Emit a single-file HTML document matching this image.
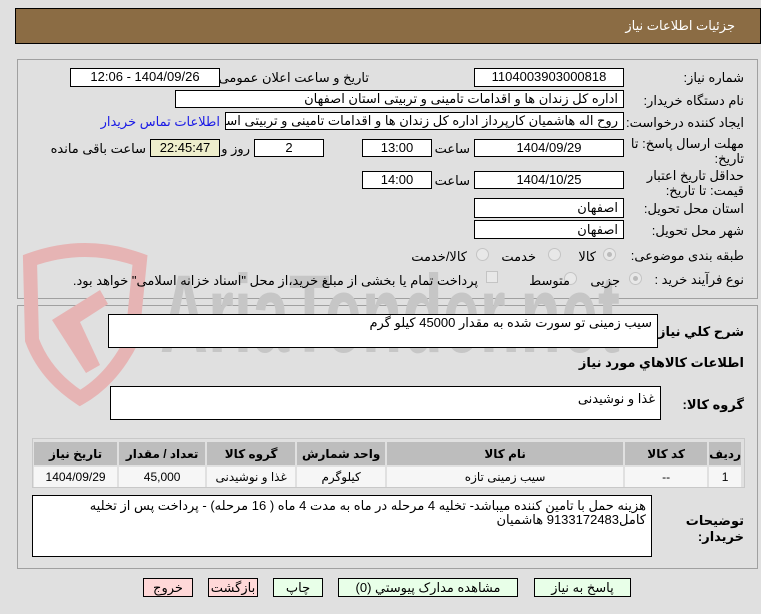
<!DOCTYPE html>
<html><head><meta charset="utf-8">
<style>
*{margin:0;padding:0;box-sizing:border-box}
body{width:761px;height:614px;background:#e0e0e0;font-family:"Liberation Sans","DejaVu Sans",sans-serif;font-size:12px;color:#000;position:relative;overflow:hidden}
.a{position:absolute;white-space:nowrap}
.box{position:absolute;background:#fff;border:1px solid #000;direction:rtl;padding:0 5px;line-height:16px;font-size:13px;white-space:nowrap;overflow:hidden}
.c{text-align:center}
.l{position:absolute;direction:rtl;text-align:right;white-space:nowrap;font-size:13px}
.b{font-weight:bold}
.radio{position:absolute;width:13px;height:13px;border-radius:50%;border:1px solid #c4c4c4;background:#e8e8e8}
.radio.on::after{content:"";position:absolute;left:3px;top:3px;width:5px;height:5px;border-radius:50%;background:#bbb}
.btn{position:absolute;height:19px;border:1px solid #000;background:#e8ffe8;text-align:center;line-height:17px;font-size:13px;direction:rtl}
.pink{background:#ffd8d8}
table{border-collapse:separate;border-spacing:2px}
td{text-align:center;font-size:12px}
</style></head><body>
<div class="a" style="left:15px;top:8px;width:746px;height:36px;background:#8b6c44;border:1px solid #000"></div>
<div class="l" style="right:26px;top:18px;color:#fff;font-size:13px">جزئیات اطلاعات نیاز</div>

<div class="a" style="left:17px;top:59px;width:741px;height:240px;border:1px solid #a0a0a0"></div>
<div class="a" style="left:17px;top:305px;width:741px;height:264px;border:1px solid #a0a0a0"></div>

<!-- watermark -->
<svg class="a" style="left:0;top:240px" width="660" height="170">
<path d="M30 20 Q85 0 140 20 L132 100 Q112 140 80 158 Q45 135 32 100 Z" fill="none" stroke="#e6b4b4" stroke-width="14"/>
<path d="M52 80 L100 50 L108 64 L80 82 L100 125 L86 133 Z" fill="#e6b4b4"/>
<text x="160" y="112" font-family="Liberation Sans" font-size="110" font-weight="bold" fill="#c6c6c6" textLength="460" lengthAdjust="spacingAndGlyphs">AriaTender.net</text>
</svg>

<div class="l" style="right:17px;top:70px">شماره نیاز:</div>
<div class="box c" style="left:474px;top:68px;width:150px;height:19px">1104003903000818</div>
<div class="l" style="right:392px;top:70px">تاریخ و ساعت اعلان عمومی:</div>
<div class="box c" style="left:70px;top:68px;width:150px;height:19px">1404/09/26 - 12:06</div>

<div class="l" style="right:17px;top:93px">نام دستگاه خریدار:</div>
<div class="box" style="left:175px;top:90px;width:449px;height:18px">اداره کل زندان ها و اقدامات تامینی و تربیتی استان اصفهان</div>

<div class="l" style="right:17px;top:115px">ایجاد کننده درخواست:</div>
<div class="box" style="left:225px;top:112px;width:399px;height:18px">روح اله هاشمیان کارپرداز اداره کل زندان ها و اقدامات تامینی و تربیتی استان اصفهان</div>
<div class="l" style="right:541px;top:114px;color:#1a1ae6">اطلاعات تماس خریدار</div>

<div class="l" style="right:17px;top:136px;line-height:15px">مهلت ارسال پاسخ: تا<br>تاریخ:</div>
<div class="box c" style="left:474px;top:139px;width:150px;height:18px">1404/09/29</div>
<div class="l" style="right:291px;top:141px">ساعت</div>
<div class="box c" style="left:362px;top:139px;width:70px;height:18px">13:00</div>
<div class="box c" style="left:254px;top:139px;width:70px;height:18px">2</div>
<div class="l" style="right:511px;top:141px">روز و</div>
<div class="box c" style="left:150px;top:139px;width:70px;height:18px;background:#eeeecc">22:45:47</div>
<div class="l" style="right:615px;top:141px">ساعت باقی مانده</div>

<div class="l" style="right:17px;top:168px;line-height:15px">حداقل تاریخ اعتبار<br>قیمت: تا تاریخ:</div>
<div class="box c" style="left:474px;top:171px;width:150px;height:18px">1404/10/25</div>
<div class="l" style="right:291px;top:173px">ساعت</div>
<div class="box c" style="left:362px;top:171px;width:70px;height:18px">14:00</div>

<div class="l" style="right:17px;top:201px">استان محل تحویل:</div>
<div class="box" style="left:474px;top:198px;width:150px;height:20px;line-height:18px">اصفهان</div>
<div class="l" style="right:17px;top:223px">شهر محل تحویل:</div>
<div class="box" style="left:474px;top:220px;width:150px;height:19px;line-height:17px">اصفهان</div>

<div class="l" style="right:17px;top:248px">طبقه بندی موضوعی:</div>
<div class="radio on" style="left:603px;top:248px"></div>
<div class="l" style="right:165px;top:249px">کالا</div>
<div class="radio" style="left:548px;top:248px"></div>
<div class="l" style="right:225px;top:249px">خدمت</div>
<div class="radio" style="left:476px;top:248px"></div>
<div class="l" style="right:294px;top:249px">کالا/خدمت</div>

<div class="l" style="right:17px;top:272px">نوع فرآیند خرید :</div>
<div class="radio on" style="left:629px;top:272px"></div>
<div class="l" style="right:141px;top:273px">جزیی</div>
<div class="radio" style="left:564px;top:272px"></div>
<div class="l" style="right:191px;top:273px">متوسط</div>
<div class="a" style="left:486px;top:271px;width:12px;height:12px;border:1px solid #c4c4c4;background:#e8e8e8"></div>
<div class="l" style="right:283px;top:273px">پرداخت تمام یا بخشی از مبلغ خرید،از محل "اسناد خزانه اسلامی" خواهد بود.</div>

<div class="l b" style="right:17px;top:324px">شرح کلي نياز:</div>
<div class="box" style="left:108px;top:314px;width:550px;height:34px">سیب زمینی تو سورت شده به مقدار 45000  کیلو گرم</div>
<div class="l b" style="right:17px;top:355px">اطلاعات کالاهاي مورد نياز</div>
<div class="l b" style="right:17px;top:397px">گروه کالا:</div>
<div class="box" style="left:110px;top:386px;width:551px;height:34px;padding-top:4px">غذا و نوشیدنی</div>

<div class="a" style="left:32px;top:438px;width:713px;height:50px;border:1px solid #c8c8c8">
<table style="width:711px;margin:1px 0 0 -1px;direction:rtl">
<tr style="background:#bdbdbd;height:23px;font-weight:bold"><td style="width:28px">ردیف</td><td style="width:82px">کد کالا</td><td style="width:236px">نام کالا</td><td style="width:88px">واحد شمارش</td><td style="width:88px">گروه کالا</td><td style="width:86px">تعداد / مقدار</td><td>تاریخ نیاز</td></tr>
<tr style="background:#f6f6f6;height:20px"><td>1</td><td>--</td><td>سیب زمینی تازه</td><td>کیلوگرم</td><td>غذا و نوشیدنی</td><td>45,000</td><td>1404/09/29</td></tr>
</table></div>

<div class="l b" style="right:17px;top:513px;line-height:16px">توضیحات<br>خریدار:</div>
<div class="box" style="left:32px;top:495px;width:620px;height:62px;white-space:normal;line-height:14px;padding-top:3px">هزینه حمل با تامین کننده میباشد- تخلیه 4 مرحله در ماه به مدت 4 ماه ( 16 مرحله) - پرداخت پس از تخلیه کامل9133172483 هاشمیان</div>

<div class="btn" style="left:534px;top:578px;width:97px">پاسخ به نیاز</div>
<div class="btn" style="left:338px;top:578px;width:180px">مشاهده مدارک پیوستي (0)</div>
<div class="btn" style="left:273px;top:578px;width:50px">چاپ</div>
<div class="btn pink" style="left:208px;top:578px;width:50px">بازگشت</div>
<div class="btn pink" style="left:143px;top:578px;width:50px">خروج</div>
</body></html>
